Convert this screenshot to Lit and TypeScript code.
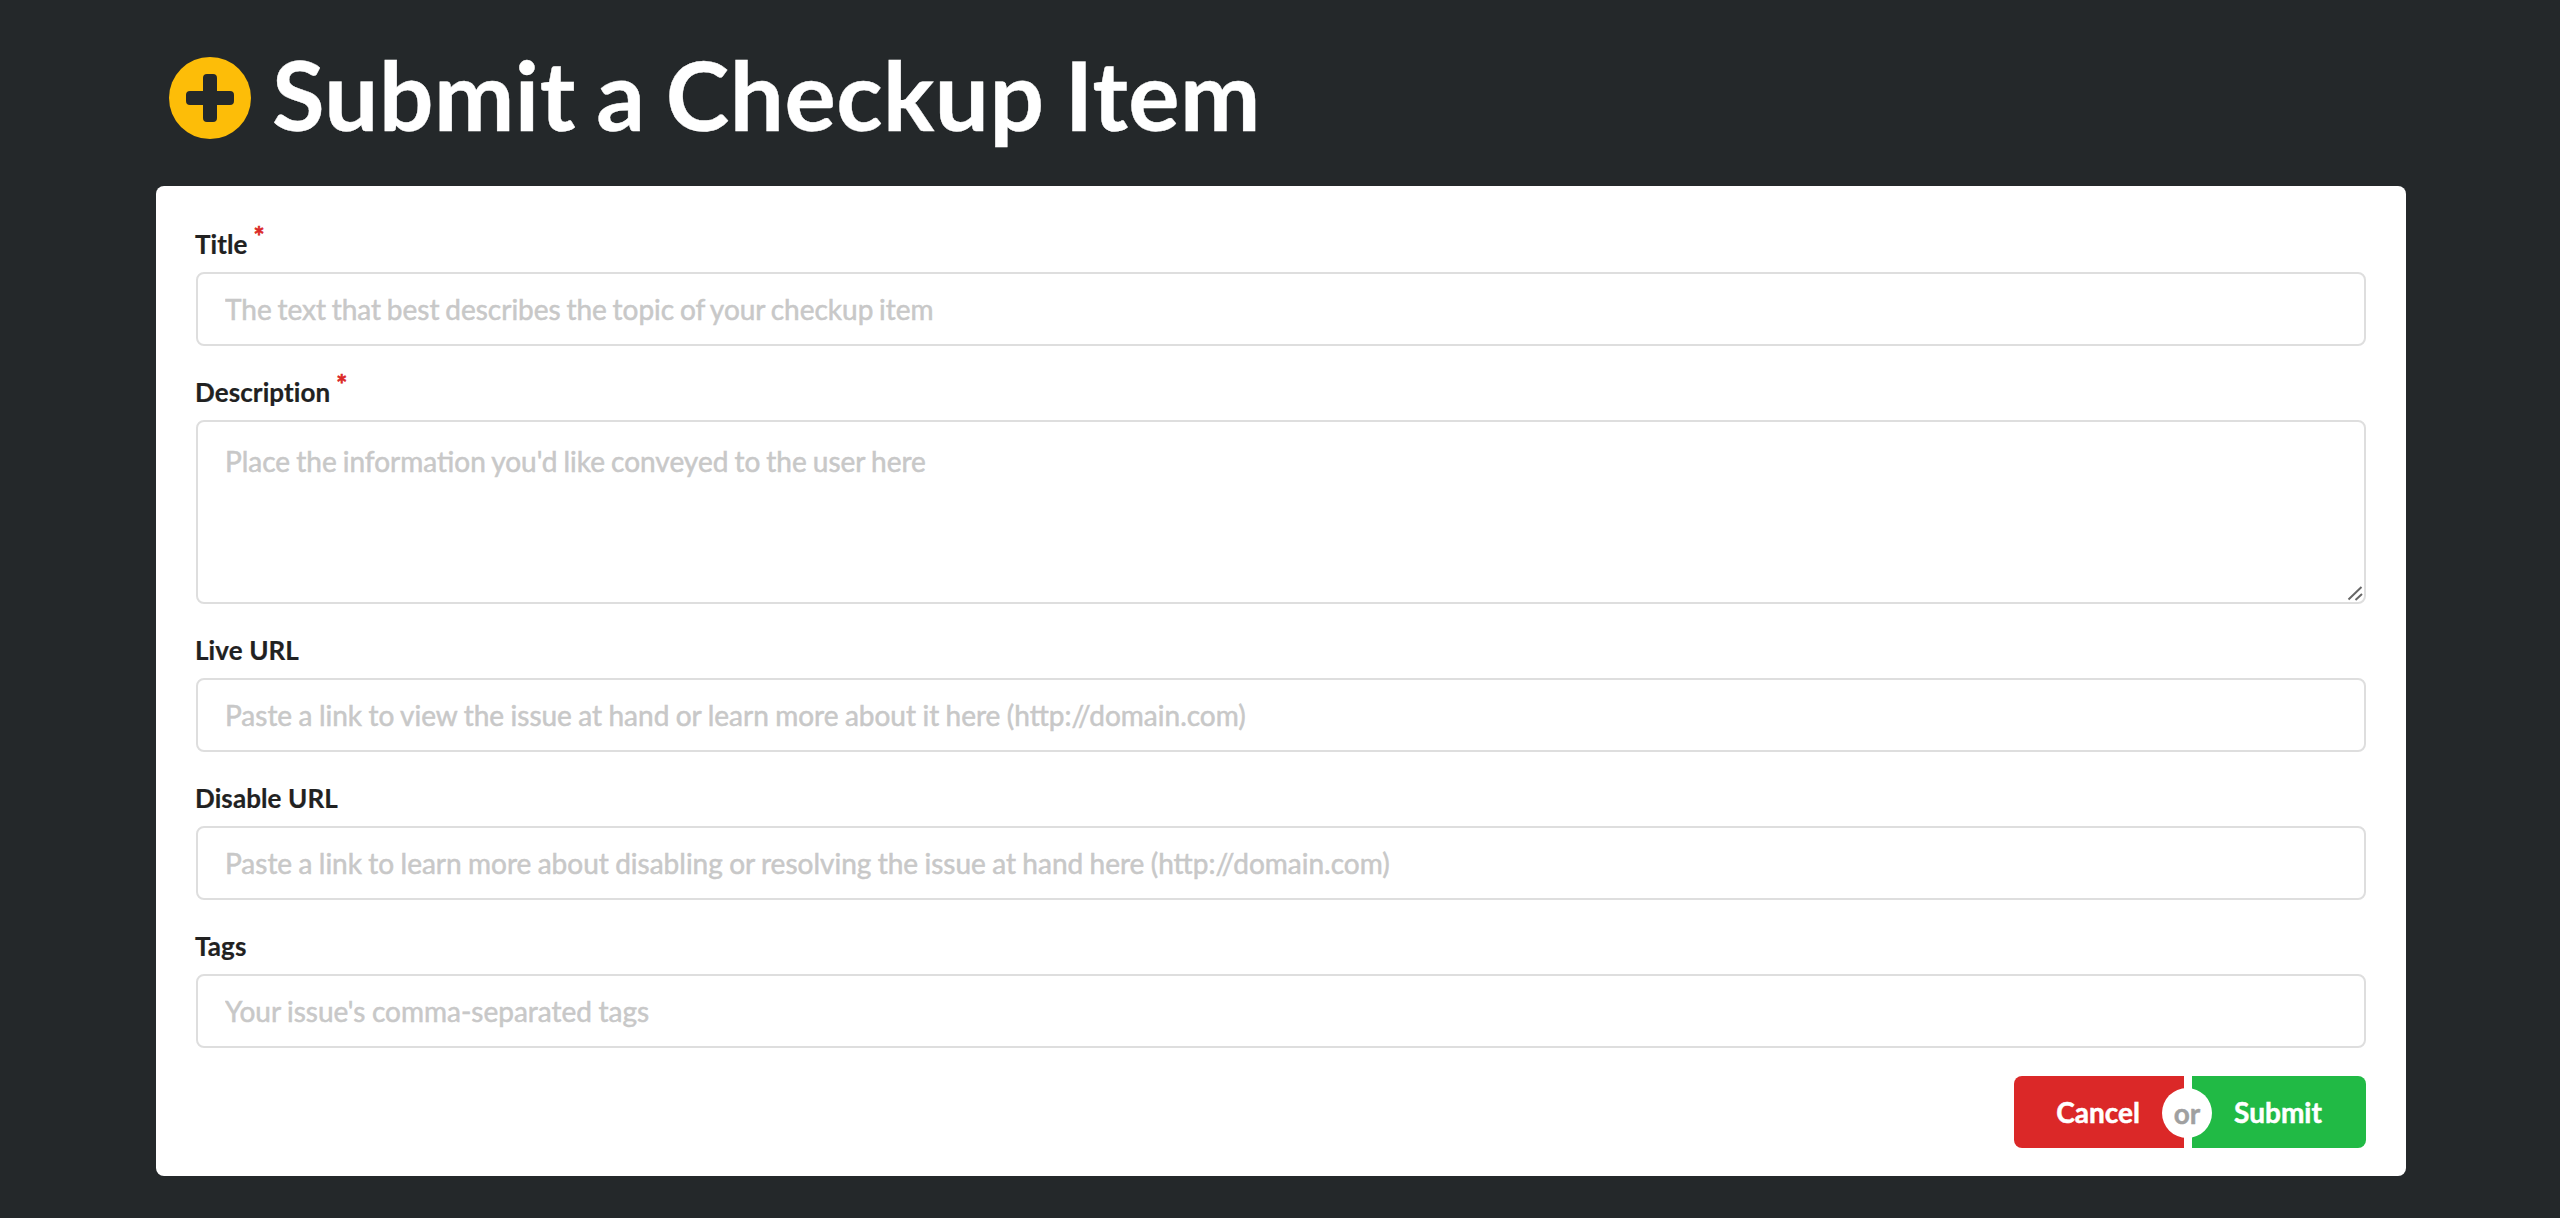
import { LitElement, html, css } from "lit";
import { customElement } from "lit/decorators.js";

interface Field { name: string; ph: string; req?: boolean; area?: boolean; ws: number }

const FIELDS: Field[] = [
  { name: "Title", ph: "The text that best describes the topic of your checkup item", req: true, ws: -1.44 },
  { name: "Description", ph: "Place the information you'd like conveyed to the user here", req: true, area: true, ws: -1.1 },
  { name: "Live URL", ph: "Paste a link to view the issue at hand or learn more about it here (http://domain.com)", ws: -0.76 },
  { name: "Disable URL", ph: "Paste a link to learn more about disabling or resolving the issue at hand here (http://domain.com)", ws: -0.81 },
  { name: "Tags", ph: "Your issue's comma-separated tags", ws: -0.67 },
];

@customElement("app-root")
export class AppRoot extends LitElement {
  static styles = css`
    :host { display: block; min-height: 1218px; background: #24282a; font-family: Lato, "Liberation Sans", sans-serif; box-sizing: border-box; padding: 0 154px 42px 156px; }
    * { box-sizing: border-box; }
    .head { display: flex; align-items: center; gap: 21px; height: 186px; padding: 2px 0 0 13px; margin: 0; color: #fff; font-size: 96px; font-weight: 700; line-height: 1; letter-spacing: 0.5px; word-spacing: -3.5px; -webkit-text-stroke: 0.4px #fff; }
    .head svg { width: 82px; height: 82px; flex: none; margin-top: 8px; }
    .card { background: #fff; border-radius: 8px; padding: 40px; height: 990px; }
    .field { display: flex; flex-direction: column; margin-bottom: 28px; }
    label { font-size: 26px; font-weight: 700; color: #212121; line-height: 36px; height: 46px; margin-left: -1px; letter-spacing: 0.1px; -webkit-text-stroke: 0.2px #212121; }
    .req { color: #db2828; margin-left: 6px; font-size: 26px; position: relative; top: -8px; -webkit-text-stroke: 0.6px #db2828; }
    .box { position: relative; display: block; }
    input, textarea { display: block; width: 100%; height: 74px; border: 2px solid #dedede; border-radius: 8px; padding: 0 27px; font: 400 28px Lato, sans-serif; color: #333; background: #fff; outline: none; }
    textarea { height: 184px; padding: 21px 27px; line-height: 36px; resize: none; }
    ::placeholder { color: #c8c8c8; opacity: 1; word-spacing: var(--ws, 0); -webkit-text-stroke: 0.5px #c8c8c8; }
    .grip { position: absolute; right: 2px; bottom: 2px; width: 18px; height: 18px; pointer-events: none; }
    .actions { display: flex; justify-content: flex-end; }
    .buttons { display: flex; gap: 8px; position: relative; height: 72px; }
    .btn { border: 0; color: #fff; font: 700 28px Lato, sans-serif; height: 72px; padding: 0; -webkit-text-stroke: 0.5px #fff; }
    .cancel { width: 170px; background: #db2828; border-radius: 8px 0 0 8px; padding-right: 2px; }
    .submit { width: 174px; background: #21ba45; border-radius: 0 8px 8px 0; padding-right: 2px; }
    .or { position: absolute; left: 148px; top: 12px; width: 50px; height: 50px; border-radius: 50%; background: #fff; color: #a0a0a0; font-weight: 700; font-size: 28px; display: flex; align-items: center; justify-content: center; -webkit-text-stroke: 0.4px #a0a0a0; }
  `;

  private field(f: Field) {
    const spacing = `--ws: ${f.ws}px`;
    return html`<div class="field">
      <label>${f.name}${f.req ? html`<span class="req">*</span>` : ""}</label>
      ${f.area
        ? html`<div class="box"><textarea style=${spacing} placeholder=${f.ph}></textarea><svg class="grip" viewBox="0 0 18 18"><path d="M2.5 15.5 15.5 3M9.5 16 16 10" stroke="#666" stroke-width="2" fill="none"/></svg></div>`
        : html`<input style=${spacing} type="text" placeholder=${f.ph} />`}
    </div>`;
  }

  render() {
    return html`
      <h1 class="head">
        <svg viewBox="0 0 82 82"><circle cx="41" cy="41" r="41" fill="#fdbd08"/><path d="M34 21a4 4 0 0 1 4-4h6a4 4 0 0 1 4 4v13h13a4 4 0 0 1 4 4v6a4 4 0 0 1-4 4H48v13a4 4 0 0 1-4 4h-6a4 4 0 0 1-4-4V48H21a4 4 0 0 1-4-4v-6a4 4 0 0 1 4-4h13z" fill="#24282a"/></svg>
        <span>Submit a Checkup Item</span>
      </h1>
      <form class="card">
        ${FIELDS.map((f) => this.field(f))}
        <div class="actions">
          <div class="buttons">
            <button type="button" class="btn cancel">Cancel</button>
            <div class="or">or</div>
            <button type="button" class="btn submit">Submit</button>
          </div>
        </div>
      </form>
    `;
  }
}
